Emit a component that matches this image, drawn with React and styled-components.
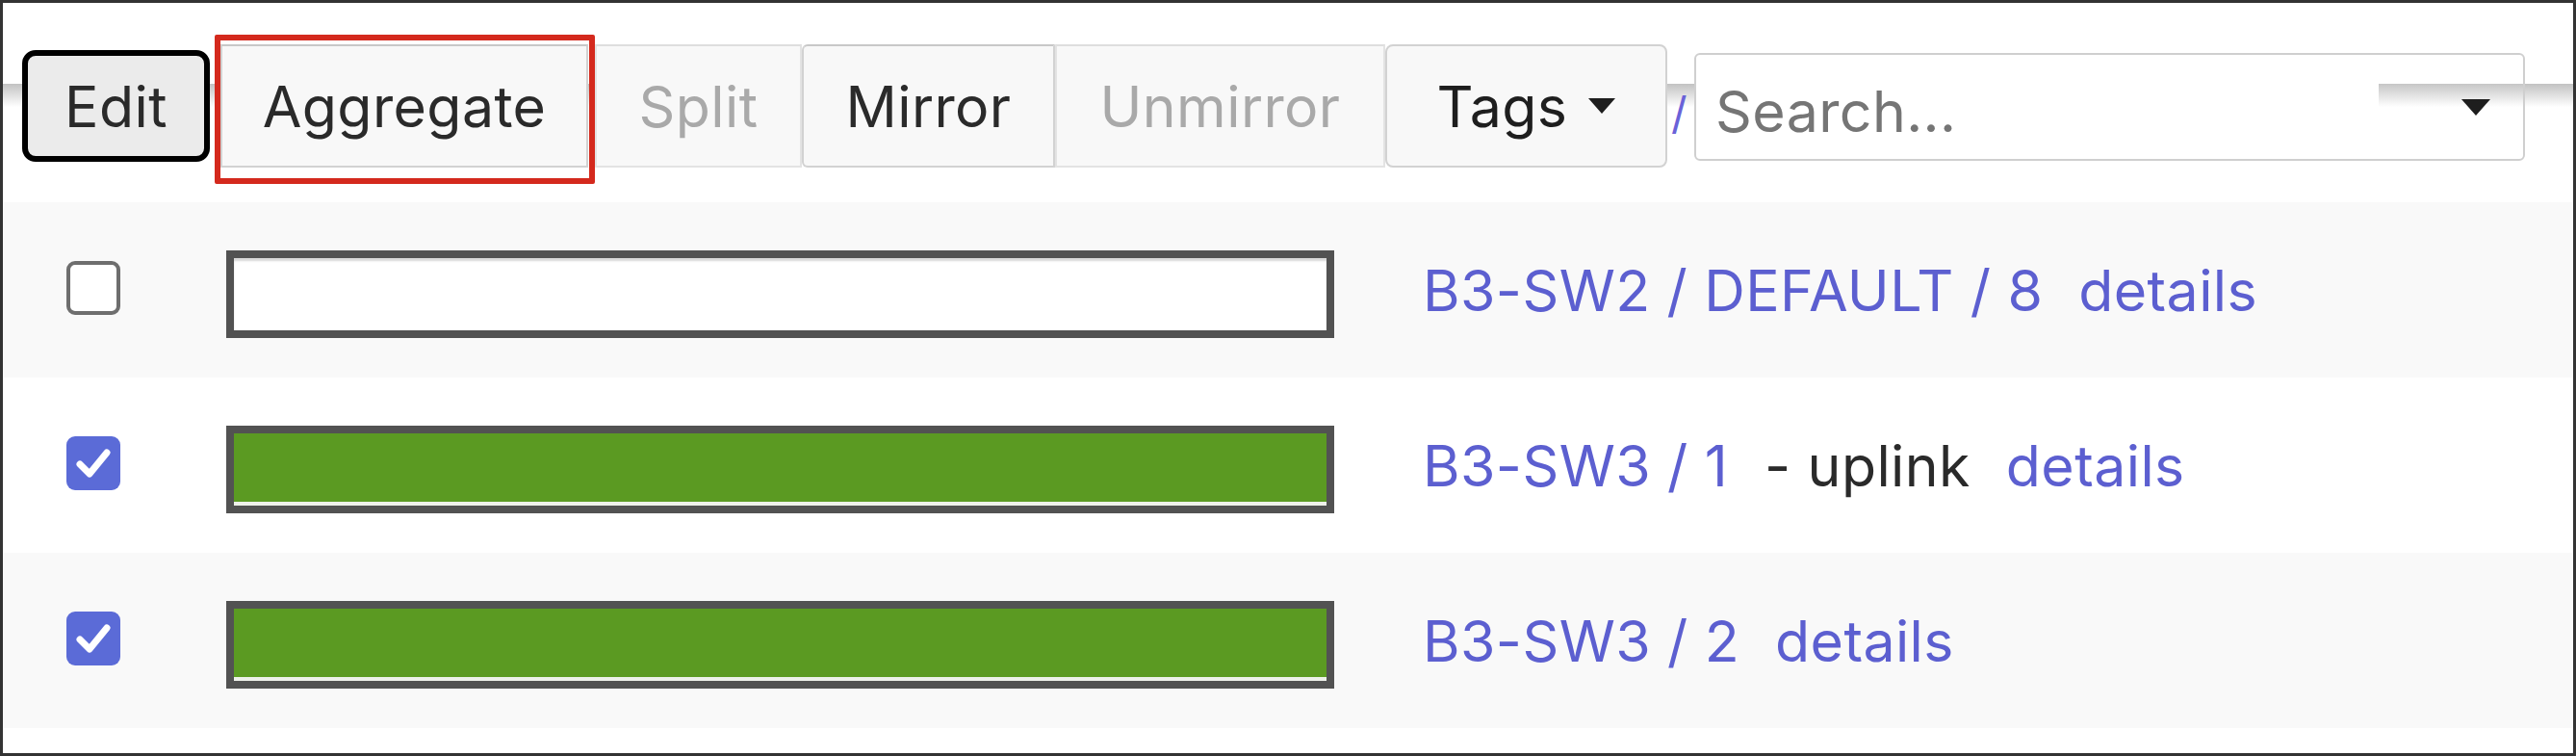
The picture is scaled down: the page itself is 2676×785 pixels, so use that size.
import React from 'react';
import styled, { createGlobalStyle } from 'styled-components';

const rows = [
  { id: 1, checked: false, up: false, name: 'B3-SW2 / DEFAULT / 8' },
  { id: 2, checked: true, up: true, name: 'B3-SW3 / 1', note: '- uplink' },
  { id: 3, checked: true, up: true, name: 'B3-SW3 / 2' },
];

function Caret({ w = 30, h = 17 }) {
  return (
    <svg width={w} height={h} viewBox='0 0 30 17'>
      <polygon points='0,0 30,0 15,17' fill='#1e1e1e' />
    </svg>
  );
}

function Check() {
  return (
    <svg width='56' height='56' viewBox='0 0 56 56'>
      <path d='M14 29 L24 39 L42 17' fill='none' stroke='#fff' strokeWidth='7' strokeLinecap='round' strokeLinejoin='round' />
    </svg>
  );
}

export default function App() {
  return (
    <>
      <GlobalStyle />
      <Frame>
        <Toolbar>
          <EditButton>Edit</EditButton>
          <Highlight>
            <ToolButton $w={382}>Aggregate</ToolButton>
          </Highlight>
          <ToolButton $w={215} $disabled>Split</ToolButton>
          <ToolButton $w={263} $first>Mirror</ToolButton>
          <ToolButton $w={343} $disabled>Unmirror</ToolButton>
          <TagsButton>
            Tags
            <Caret w={28} h={16} />
          </TagsButton>
          <Slash>/</Slash>
          <SearchBox>
            <Placeholder>Search...</Placeholder>
            <Caret />
          </SearchBox>
        </Toolbar>
        <List>
          {rows.map((row, i) => (
            <Row key={row.id} $odd={i % 2 === 0}>
              <CheckBox $checked={row.checked}>{row.checked && <Check />}</CheckBox>
              <Bar $up={row.up} />
              <Label>
                <Link>{row.name}</Link>
                {row.note && <Note>{row.note}</Note>}
                <Link $gap>details</Link>
              </Label>
            </Row>
          ))}
        </List>
      </Frame>
    </>
  );
}

const GlobalStyle = createGlobalStyle`
  html, body {
    margin: 0;
    padding: 0;
    background: #fff;
  }
  body {
    font-family: Inter, 'Liberation Sans', sans-serif;
  }
`;

const Frame = styled.div`
  box-sizing: border-box;
  width: 2676px;
  height: 785px;
  border: 3px solid #333;
  background: #fff;
  overflow: hidden;
`;

const Toolbar = styled.div`
  box-sizing: border-box;
  height: 207px;
  padding: 7px 0 0 20px;
  display: flex;
  align-items: center;
  background: linear-gradient(to bottom, #c2c2c2, #fff) no-repeat;
  background-size: 100% 24px;
  background-position: 0 84px;
`;

const EditButton = styled.div`
  box-sizing: border-box;
  width: 195px;
  height: 116px;
  border: 6px solid #000;
  border-radius: 14px;
  background: #ebebeb;
  color: #2a2a2a;
  font-size: 59px;
  letter-spacing: 0.4px;
  display: flex;
  align-items: center;
  justify-content: center;
`;

const Highlight = styled.div`
  box-sizing: border-box;
  margin: 7px 0 0 5px;
  padding: 4px 1px 11px 0;
  border: 6px solid #d4291d;
  border-radius: 2px;
  display: flex;
`;

const ToolButton = styled.div`
  box-sizing: border-box;
  width: ${(p) => p.$w}px;
  height: 128px;
  border: 2px solid ${(p) => (p.$disabled ? '#e3e3e3' : '#d2d2d2')};
  border-top-color: ${(p) => (p.$disabled ? '#dedede' : '#c8c8c8')};
  border-radius: ${(p) => (p.$first ? '6px 0 0 6px' : '0')};
  background: #f8f8f8;
  color: ${(p) => (p.$disabled ? '#a9a9a9' : '#2a2a2a')};
  font-size: 59px;
  letter-spacing: 0.4px;
  display: flex;
  align-items: center;
  justify-content: center;
`;

const TagsButton = styled.div`
  box-sizing: border-box;
  width: 293px;
  height: 128px;
  border: 2px solid #d2d2d2;
  border-radius: 8px;
  background: #f8f8f8;
  color: #1e1e1e;
  font-size: 59px;
  letter-spacing: 0.4px;
  display: flex;
  align-items: center;
  justify-content: center;
  gap: 22px;
`;

const Slash = styled.span`
  width: 28px;
  align-self: flex-start;
  margin-top: 84px;
  color: #6a62d8;
  font-size: 46px;
  line-height: 1;
  padding-left: 4px;
  box-sizing: border-box;
`;

const SearchBox = styled.div`
  box-sizing: border-box;
  width: 863px;
  height: 112px;
  margin-top: 2px;
  border: 2px solid #cfcfcf;
  border-radius: 6px;
  background: #fff linear-gradient(to bottom, #c6c6c6, #fff) no-repeat;
  background-size: 150px 24px;
  background-position: right 0 top 30px;
  padding: 0 34px 0 20px;
  display: flex;
  align-items: center;
  justify-content: space-between;
`;

const Placeholder = styled.span`
  color: #757575;
  font-size: 59px;
  letter-spacing: 0.4px;
  margin-top: 8px;
`;

const List = styled.div`
  display: flex;
  flex-direction: column;
`;

const Row = styled.div`
  box-sizing: border-box;
  height: 182px;
  padding-left: 66px;
  display: flex;
  align-items: center;
  background: ${(p) => (p.$odd ? '#f9f9f9' : '#fff')};
`;

const CheckBox = styled.div`
  box-sizing: border-box;
  width: 56px;
  height: 56px;
  margin-bottom: 4px;
  border-radius: 9px;
  border: ${(p) => (p.$checked ? 'none' : '4px solid #6e6e6e')};
  background: ${(p) => (p.$checked ? '#5b6bd7' : '#fff')};
  display: flex;
  align-items: center;
  justify-content: center;
`;

const Bar = styled.div`
  box-sizing: border-box;
  width: 1151px;
  height: 91px;
  margin: 8px 0 0 110px;
  border: 8px solid #525252;
  background: ${(p) => (p.$up ? '#5b9a22' : '#fff')};
  box-shadow: ${(p) => (p.$up ? 'inset 0 -4px 0 #eef1ea' : 'inset 0 3px 2px #d8d8d8')};
`;

const Label = styled.div`
  margin-left: 92px;
  font-size: 59px;
  letter-spacing: 0.4px;
  display: flex;
  align-items: baseline;
  white-space: nowrap;
`;

const Link = styled.span`
  color: #5c5fd0;
  margin-left: ${(p) => (p.$gap ? '37px' : '0')};
`;

const Note = styled.span`
  color: #2a2a2a;
  margin-left: 38px;
`;
